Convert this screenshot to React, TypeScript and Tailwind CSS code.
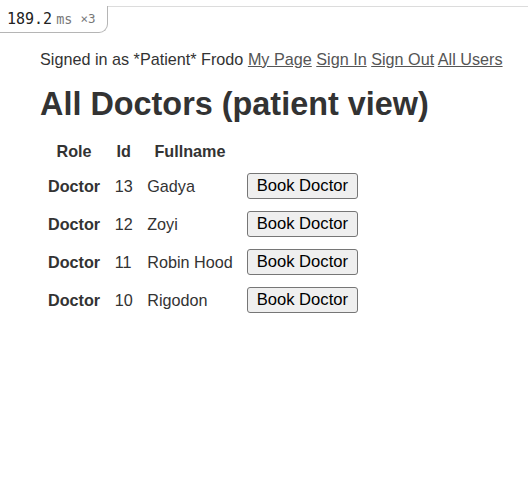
import React from 'react';

const doctors = [
   { id: 13, name: 'Gadya' },
   { id: 12, name: 'Zoyi' },
   { id: 11, name: 'Robin Hood' },
   { id: 10, name: 'Rigodon' },
];

const App = () => {
   return (
      <div className="relative min-h-[480px] bg-white font-['Liberation_Sans',Arial,sans-serif] text-[16.2px] text-[#333]">
         <div className="h-[6px]" />
         <div className="border-t border-[#dcdcdc]">
            {/* timing badge */}
            <div className="absolute left-0 top-[6px] flex h-[27px] w-[108px] items-center gap-[4px] rounded-br-[9px] border-b border-r border-[#b5b5b5] bg-white pl-[7px] font-['DejaVu_Sans_Mono',monospace]">
               <span className="text-[15px] text-[#222]">189.2</span>
               <span className="text-[13.5px] text-[#777]">ms</span>
               <span className="ml-[4px] text-[12.5px] text-[#777]">×3</span>
            </div>

            <div className="pl-[40px] pt-[43px]">
               <div className="leading-[18px]">
                  Signed in as *Patient* Frodo{' '}
                  <a href="#" className="text-[#555] underline">My Page</a>{' '}
                  <a href="#" className="text-[#555] underline">Sign In</a>{' '}
                  <a href="#" className="text-[#555] underline">Sign Out</a>{' '}
                  <a href="#" className="text-[#555] underline">All Users</a>
               </div>

               <h1 className="mt-[18px] text-[32.4px] font-bold leading-[37px]">All Doctors (patient view)</h1>

               <table className="mt-[11px] border-separate border-spacing-[2px]">
                  <thead>
                     <tr>
                        <th className="px-[6px] py-[3px] font-bold">Role</th>
                        <th className="px-[6.5px] py-[3px] font-bold">Id</th>
                        <th className="px-[6px] py-[3px] font-bold">Fullname</th>
                        <th className="px-[6px] py-[3px]" />
                     </tr>
                  </thead>
                  <tbody>
                     {doctors.map((d) => (
                        <tr key={d.id}>
                           <td className="px-[6px] py-[5px] font-bold">Doctor</td>
                           <td className="px-[6.5px] py-[5px]">{d.id}</td>
                           <td className="px-[6px] py-[5px]">{d.name}</td>
                           <td className="px-[6px] py-[5px]">
                              <button
                                 type="button"
                                 className="h-[26px] rounded-[3px] border border-[#767676] bg-[#efefef] px-[9px] text-[16.6px] leading-[18px] text-black"
                              >
                                 Book Doctor
                              </button>
                           </td>
                        </tr>
                     ))}
                  </tbody>
               </table>
            </div>
         </div>
      </div>
   );
};

export default App;
